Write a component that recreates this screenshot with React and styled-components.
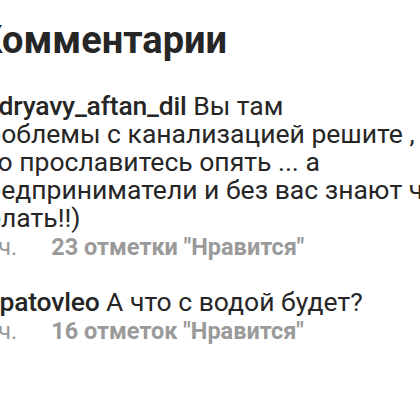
import React from 'react';
import styled, { createGlobalStyle } from 'styled-components';

const GlobalStyle = createGlobalStyle`
  html, body {
    margin: 0;
    padding: 0;
    background: #ffffff;
  }
  body {
    font-family: Roboto, "Noto Sans", "Liberation Sans", sans-serif;
    color: #262626;
    overflow: hidden;
  }
`;

const Screen = styled.div`
  width: 420px;
  height: 420px;
  overflow: hidden;
  background: #ffffff;
`;

// the column runs past the left edge of the viewport (the avatar gutter is off-screen)
const Column = styled.div`
  margin-left: -29px;
  width: 560px;
  display: flex;
  flex-direction: column;
`;

const Title = styled.h1`
  margin: 0;
  padding: 18px 0 0 7px;
  font-size: 38px;
  line-height: 44px;
  font-weight: 700;
  color: #262626;
`;

const CommentList = styled.div`
  display: flex;
  flex-direction: column;
  gap: 27px;
  padding-top: 30px;
`;

const Comment = styled.div`
  display: flex;
  flex-direction: column;
`;

const Text = styled.p`
  margin: 0;
  font-size: 26.5px;
  line-height: 28px;
  font-weight: 400;
  color: #262626;
  white-space: nowrap;
`;

const Username = styled.span`
  font-weight: 500;
  letter-spacing: -0.2px;
`;

const Meta = styled.div`
  display: flex;
  align-items: center;
  gap: 34px;
  margin: 1px 0 0 -5px;
  font-size: 23.5px;
  line-height: 28px;
  color: #9a9a9a;
`;

const Likes = styled.span`
  font-weight: 700;
`;

const comments = [
  {
    id: 1,
    user: 'ozdryavy_aftan_dil',
    lines: [
      'Вы там',
      'проблемы с канализацией решите ,',
      'что прославитесь опять ... а',
      'предприниматели и без вас знают что',
      'делать!!)',
    ],
    time: '15 ч.',
    likes: '23 отметки "Нравится"',
  },
  {
    id: 2,
    user: 'kopatovleo',
    lines: ['А что с водой будет?'],
    time: '15 ч.',
    likes: '16 отметок "Нравится"',
  },
];

export default function App() {
  return (
    <>
      <GlobalStyle />
      <Screen>
        <Column>
          <Title>Комментарии</Title>
          <CommentList>
            {comments.map(c => (
              <Comment key={c.id}>
                <Text>
                  <Username>{c.user}</Username>{' '}
                  {c.lines.map((line, i) => (
                    <React.Fragment key={i}>
                      {i > 0 && <br />}
                      {line}
                    </React.Fragment>
                  ))}
                </Text>
                <Meta>
                  <span>{c.time}</span>
                  <Likes>{c.likes}</Likes>
                </Meta>
              </Comment>
            ))}
          </CommentList>
        </Column>
      </Screen>
    </>
  );
}
